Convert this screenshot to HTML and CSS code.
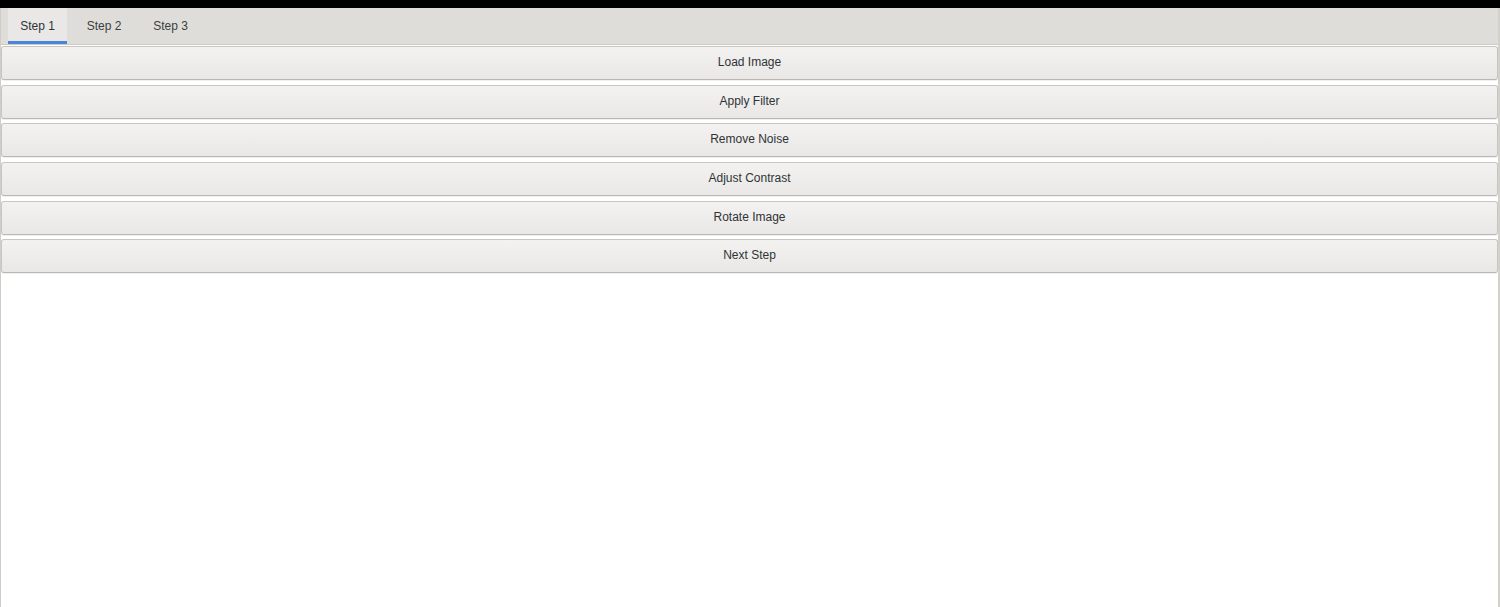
FILE: index.html
```html
<!DOCTYPE html>
<html>
<head>
<meta charset="utf-8">
<link rel="stylesheet" href="styles.css">
</head>
<body>
<div class="topbar"></div>
<div class="window">
  <div class="tabs">
    <div class="tab active">Step 1</div>
    <div class="tab">Step 2</div>
    <div class="tab">Step 3</div>
  </div>
  <div class="buttons">
    <button class="btn">Load Image</button>
    <button class="btn">Apply Filter</button>
    <button class="btn">Remove Noise</button>
    <button class="btn">Adjust Contrast</button>
    <button class="btn">Rotate Image</button>
    <button class="btn">Next Step</button>
  </div>
</div>
</body>
</html>
```
FILE: styles.css
```css
html, body {
  margin: 0;
  padding: 0;
  height: 100%;
  background: #ffffff;
  font-family: "Liberation Sans", Arial, sans-serif;
}
body {
  display: flex;
  flex-direction: column;
}
.topbar {
  height: 8px;
  background: #000000;
  flex: none;
}
.window {
  flex: 1;
  display: flex;
  flex-direction: column;
  border-left: 1px solid #cfcdc8;
  border-right: 2px solid #d3d1cc;
  background: #ffffff;
}
.tabs {
  display: flex;
  height: 37px;
  background: #dfddd9;
  border-bottom: 1px solid #cdcbc6;
  padding-left: 7px;
  flex: none;
  box-sizing: border-box;
}
.tab {
  width: 59px;
  display: flex;
  align-items: center;
  justify-content: center;
  font-size: 12px;
  color: #3a3e40;
  padding-top: 2px;
  box-sizing: border-box;
  border-bottom: 3px solid transparent;
  margin-right: 7.5px;
}
.tab.active {
  background: #e9e8e6;
  border-bottom-color: #4a84d9;
  color: #2e3436;
}
.buttons {
  display: flex;
  flex-direction: column;
  gap: 4.7px;
  padding-top: 1px;
}
.btn {
  height: 34px;
  margin: 0;
  border: 1px solid #c9c6c1;
  border-bottom-color: #bab7b2;
  border-radius: 3px;
  background: linear-gradient(#f3f2f1, #e9e8e6);
  box-shadow: 0 1px 0 rgba(0,0,0,0.06);
  font-family: "Liberation Sans", Arial, sans-serif;
  font-size: 12px;
  color: #2e3436;
  padding: 0 0 2px 0;
}
```
